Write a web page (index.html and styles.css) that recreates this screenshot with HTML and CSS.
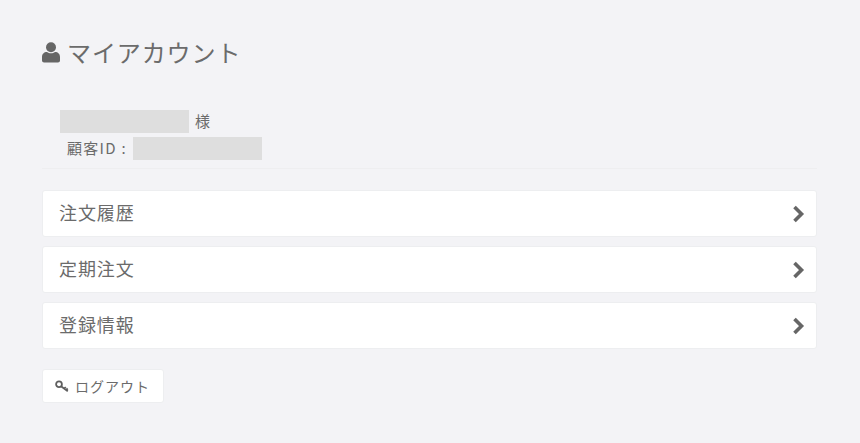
FILE: index.html
```html
<!DOCTYPE html>
<html lang="ja">
<head>
<meta charset="utf-8">
<title>マイアカウント</title>
<link rel="stylesheet" href="styles.css">
</head>
<body>
<main class="page">
  <h1 class="title">
    <svg class="user-icon" viewBox="0 0 18 21" aria-hidden="true"><circle cx="9" cy="5.2" r="5"/><path d="M0 18.500v-3.500c0-3 2-5 5-5 1.200.8 2.500 1.300 4 1.300s2.800-.5 4-1.300c3 0 5 2 5 5v3.500c0 1-1 2-2 2H2c-1 0-2-1-2-2z"/></svg>
    <span class="title-text">マイアカウント</span>
  </h1>
  <section class="profile">
    <div class="name-row"><span class="mask"></span><span class="shift">様</span></div>
    <div class="id-row"><span class="id-label shift">顧客ID :</span><span class="mask"></span></div>
  </section>
  <nav class="menu">
    <a class="menu-item" href="#"><span class="shift">注文履歴</span><svg class="chev" viewBox="0 0 14 18" aria-hidden="true"><path d="M2.500 2l7 7-7 7"/></svg></a>
    <a class="menu-item" href="#"><span class="shift">定期注文</span><svg class="chev" viewBox="0 0 14 18" aria-hidden="true"><path d="M2.500 2l7 7-7 7"/></svg></a>
    <a class="menu-item" href="#"><span class="shift">登録情報</span><svg class="chev" viewBox="0 0 14 18" aria-hidden="true"><path d="M2.500 2l7 7-7 7"/></svg></a>
  </nav>
  <a class="logout" href="#">
    <svg class="key" viewBox="0 0 14 13" aria-hidden="true"><circle cx="4" cy="4.200" r="2.900"/><path d="M6 6.200l6.800 5M9.300 8.600l1.500-1.500M11.200 10l1.500-1.500"/></svg>
    <span>ログアウト</span>
  </a>
</main>
</body>
</html>
```
FILE: styles.css
```css
* { box-sizing: border-box; }
html, body { margin: 0; padding: 0; }
body {
  background: #f3f3f6;
  color: #6b6b6b;
  font-family: "Noto Sans CJK JP", "Liberation Sans", sans-serif;
  height: 443px;
  overflow: hidden;
}
.page { padding: 35px 43px 0 42px; }
.shift { padding-bottom: 3px; }
.title {
  display: flex;
  align-items: center;
  gap: 7px;
  margin: 0;
  height: 34px;
  font-size: 24px;
  font-weight: 400;
  letter-spacing: .9px;
  color: #6b6b6b;
}
.title-text { padding-bottom: 2px; }
.user-icon { width: 18px; height: 21px; fill: #666; }
.profile {
  margin-top: 41px;
  padding: 0 18px 8px;
  border-bottom: 1px solid #eeeef0;
  font-size: 15px;
}
.name-row, .id-row { display: flex; align-items: center; height: 23px; line-height: 23px; }
.name-row { gap: 6px; }
.id-row { margin-top: 4px; }
.id-label { margin-left: 7px; width: 66px; white-space: nowrap; letter-spacing: 1.300px; }
.mask { width: 129px; height: 23px; background: #dedede; display: block; }
.menu { display: flex; flex-direction: column; gap: 9px; margin-top: 21px; }
.menu-item {
  display: flex;
  align-items: center;
  justify-content: space-between;
  height: 47px;
  padding: 0 10px 0 16px;
  background: #fff;
  border: 1px solid #edeef0;
  border-radius: 3px;
  color: #6b6b6b;
  font-size: 18px;
  letter-spacing: .9px;
  text-decoration: none;
}
.chev { width: 14px; height: 18px; fill: none; stroke: #666; stroke-width: 3.600; }
.logout {
  display: flex;
  align-items: center;
  gap: 6px;
  width: 122px;
  height: 34px;
  margin-top: 20px;
  padding-left: 12px;
  background: #fff;
  border: 1px solid #edeef0;
  border-radius: 3px;
  color: #6b6b6b;
  font-size: 14px;
  letter-spacing: 1px;
  text-decoration: none;
}
.key { width: 14px; height: 13px; fill: none; stroke: #5f5f5f; stroke-width: 1.800; }
```
